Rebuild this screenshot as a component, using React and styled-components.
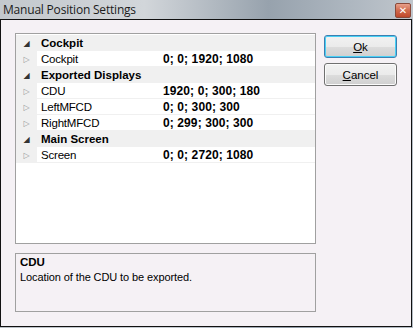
import React from 'react'
import styled, { createGlobalStyle } from 'styled-components'

const Global = createGlobalStyle`
  html, body { margin: 0; padding: 0; background: #fff; }
  body { font-family: "Liberation Sans", Arial, sans-serif; }
`

const Window = styled.div`
  width: 413px;
  height: 328px;
  display: flex;
  flex-direction: column;
  background: linear-gradient(90deg, #b9bfc6 0%, #c9ced4 40%, #8f9aa6 70%, #b5bdc5 100%);
  box-sizing: border-box;
`

const TitleBar = styled.div`
  height: 19px;
  display: flex;
  align-items: center;
  justify-content: space-between;
  padding: 0 2px 0 3px;
  background: linear-gradient(90deg, #c3c8cd 0%, #d2d6da 35%, #97a2ad 65%, #aeb7c0 85%, #c0c6cc 100%);
`

const Title = styled.div`
  font-family: "Open Sans", "Noto Sans", sans-serif;
  font-size: 12px;
  color: #1b1b1b;
  letter-spacing: -0.2px;
`

const CloseBtn = styled.div`
  width: 16px;
  height: 15px;
  margin-top: 2px;
  border-radius: 2px;
  border: 1px solid #8a4a3a;
  box-sizing: border-box;
  background: linear-gradient(180deg, #e8a08a 0%, #d06a4c 50%, #c0482a 100%);
  display: flex;
  align-items: center;
  justify-content: center;
  color: #fff;
  font-size: 10px;
  font-weight: bold;
  font-family: "DejaVu Sans", sans-serif;
`

const Client = styled.div`
  flex: 1;
  display: flex;
  gap: 8px;
  background: #f5f1f5;
  border: 1px solid #111;
  margin: 0 1px 1px 0;
  padding: 13px 14px 12px 14px;
`

const LeftCol = styled.div`
  width: 302px;
  display: flex;
  flex-direction: column;
  gap: 9px;
`

const Grid = styled.div`
  height: 211px;
  border: 1px solid #a0a0a0;
  background: #fff;
  padding-top: 1px;
  box-sizing: border-box;
`

const Row = styled.div`
  height: 16px;
  display: grid;
  grid-template-columns: 21px 126px 1fr;
  align-items: center;
  font-size: 11.5px;
  color: #000;
  background: ${p => (p.cat ? '#f0f0f0' : '#fff')};
  border-bottom: 1px solid #f0f0f0;
  box-sizing: border-box;
`

const Gutter = styled.div`
  height: 16px;
  background: #f0f0f0;
  display: flex;
  align-items: center;
  justify-content: center;
  font-size: 8px;
  color: ${p => (p.open ? '#333' : '#9a9a9a')};
  font-family: "DejaVu Sans", sans-serif;
`

const Name = styled.div`
  padding-left: 4px;
  font-weight: ${p => (p.cat ? 'bold' : 'normal')};
  white-space: nowrap;
  ${p => p.cat && 'grid-column: 2 / 4;'}
  letter-spacing: ${p => (p.cat ? '0' : '-0.2px')};
`

const Value = styled.div`
  font-size: 12px;
  font-weight: bold;
  letter-spacing: 0.1px;
  white-space: nowrap;
`

const Help = styled.div`
  height: 59px;
  border: 1px solid #a0a0a0;
  box-sizing: border-box;
  padding: 2px 4px;
  font-size: 11px;
  letter-spacing: -0.1px;
  color: #000;
`

const HelpTitle = styled.div`
  font-size: 11.5px;
  font-weight: bold;
  margin-bottom: 3px;
`

const Buttons = styled.div`
  display: flex;
  flex-direction: column;
  gap: 5px;
  padding-top: 2px;
`

const Button = styled.div`
  width: 73px;
  height: 23px;
  box-sizing: border-box;
  border: 1px solid ${p => (p.primary ? '#3c7fb1' : '#707070')};
  border-radius: 3px;
  background: linear-gradient(180deg, #f2f2f2 0%, #ebebeb 50%, #dddddd 51%, #cfcfcf 100%);
  box-shadow: inset 0 0 0 1px ${p => (p.primary ? '#48d0f5' : '#fbfbfb')};
  display: flex;
  align-items: center;
  justify-content: center;
  font-size: 11.5px;
  color: #000;
  u { text-decoration: underline; }
`

const rows = [
  { cat: true, name: 'Cockpit' },
  { name: 'Cockpit', value: '0; 0; 1920; 1080' },
  { cat: true, name: 'Exported Displays' },
  { name: 'CDU', value: '1920; 0; 300; 180' },
  { name: 'LeftMFCD', value: '0; 0; 300; 300' },
  { name: 'RightMFCD', value: '0; 299; 300; 300' },
  { cat: true, name: 'Main Screen' },
  { name: 'Screen', value: '0; 0; 2720; 1080' },
]

export default function App() {
  return (
    <>
      <Global />
      <Window>
        <TitleBar>
          <Title>Manual Position Settings</Title>
          <CloseBtn>✕</CloseBtn>
        </TitleBar>
        <Client>
          <LeftCol>
            <Grid>
              {rows.map((r, i) => (
                <Row key={i} cat={r.cat}>
                  <Gutter open={r.cat}>{r.cat ? '◢' : '▷'}</Gutter>
                  <Name cat={r.cat}>{r.name}</Name>
                  {!r.cat && <Value>{r.value}</Value>}
                </Row>
              ))}
            </Grid>
            <Help>
              <HelpTitle>CDU</HelpTitle>
              <div>Location of the CDU to be exported.</div>
            </Help>
          </LeftCol>
          <Buttons>
            <Button primary><u>O</u>k</Button>
            <Button><u>C</u>ancel</Button>
          </Buttons>
        </Client>
      </Window>
    </>
  )
}
